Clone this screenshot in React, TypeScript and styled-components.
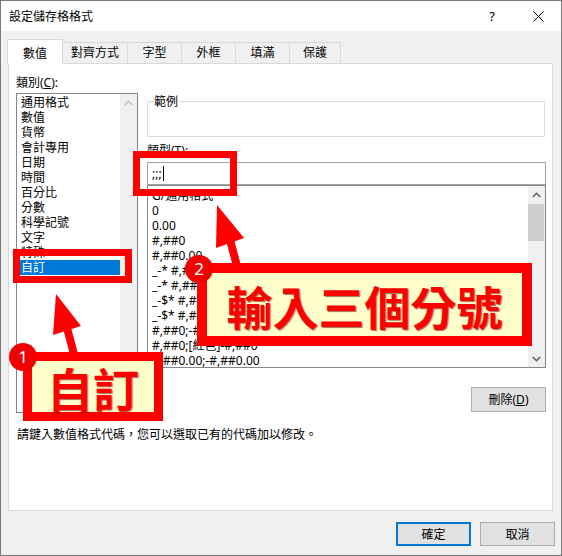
import React from "react";
import styled, { createGlobalStyle } from "styled-components";

const GlobalStyle = createGlobalStyle`
  html, body { margin: 0; padding: 0; background: #ffffff; }
  body {
    font-family: "Noto Sans", "Noto Sans CJK TC", sans-serif;
    font-size: 12px;
    color: #000;
  }
  * { box-sizing: border-box; }
`;

const Window = styled.div`
  position: relative;
  width: 562px;
  height: 556px;
  border: 1px solid #7a7a7a;
  background: #f0f0f0;
  display: flex;
  flex-direction: column;
  overflow: hidden;
`;

const TitleBar = styled.div`
  height: 30px;
  background: #ffffff;
  display: flex;
  align-items: center;
  padding-left: 8px;
  flex-shrink: 0;
`;

const TitleText = styled.span`
  font-size: 12px;
  line-height: 15px;
  margin-top: 1px;
`;

const CaptionButtons = styled.div`
  margin-left: auto;
  display: flex;
  height: 100%;
`;

const CaptionButton = styled.div`
  width: 46px;
  height: 30px;
  display: flex;
  align-items: center;
  justify-content: center;
  font-size: 13px;
  font-family: "Noto Sans", sans-serif;
`;

const TabStrip = styled.div`
  height: 33px;
  display: flex;
  align-items: flex-end;
  padding-left: 6px;
  margin-bottom: -1px;
  position: relative;
  z-index: 1;
  flex-shrink: 0;
`;

const Tab = styled.div<{ $active?: boolean; $w: number }>`
  width: ${(p) => p.$w}px;
  height: ${(p) => (p.$active ? 25 : 21)}px;
  margin-bottom: ${(p) => (p.$active ? 0 : 1)}px;
  padding-top: ${(p) => (p.$active ? 6 : 2)}px;
  background: ${(p) => (p.$active ? "#ffffff" : "#f0f0f0")};
  border: 1px solid #d9d9d9;
  border-bottom: none;
  text-align: center;
  line-height: 15px;
  position: relative;
  z-index: ${(p) => (p.$active ? 2 : 1)};
  & + & { margin-left: -1px; }
`;

const Panel = styled.div`
  margin-left: 7px;
  width: 545px;
  height: 448px;
  flex-shrink: 0;
  background: #ffffff;
  border: 1px solid #d9d9d9;
  padding: 11px 6px 0 7px;
  display: grid;
  grid-template-columns: 122px 399px;
  column-gap: 9px;
  align-content: start;
`;

const Column = styled.div`
  display: flex;
  flex-direction: column;
`;

const FieldLabel = styled.div<{ $gapTop?: number }>`
  line-height: 15px;
  margin-top: ${(p) => p.$gapTop ?? 0}px;
`;

const Accel = styled.span`
  text-decoration: underline;
  text-underline-offset: 1px;
`;

const ListBox = styled.div<{ $h: number; $mt?: number }>`
  height: ${(p) => p.$h}px;
  margin-top: ${(p) => p.$mt ?? 0}px;
  border: 1px solid #828790;
  background: #ffffff;
  display: flex;
`;

const ListItems = styled.div<{ $pl: number }>`
  flex: 1;
  padding-top: ${(p) => p.$pl === 3 ? 1 : 2}px;
  overflow: hidden;
`;

const ListItem = styled.div<{ $selected?: boolean; $pl: number }>`
  height: 15px;
  line-height: 15px;
  margin-left: 1px;
  padding-left: ${(p) => p.$pl}px;
  white-space: nowrap;
  background: ${(p) => (p.$selected ? "#0078d7" : "transparent")};
  color: ${(p) => (p.$selected ? "#ffffff" : "#000000")};
`;

const ScrollBar = styled.div`
  width: 17px;
  background: #f0f0f0;
  display: flex;
  flex-direction: column;
  flex-shrink: 0;
`;

const ScrollArrow = styled.div`
  height: 17px;
  display: flex;
  align-items: center;
  justify-content: center;
`;

const ScrollThumb = styled.div`
  height: 37px;
  margin: 1px 1px 0 0;
  background: #cdcdcd;
`;

const Spacer = styled.div`
  flex: 1;
`;

const GroupBox = styled.div`
  position: relative;
  margin-top: 26px;
  width: 398px;
  height: 36px;
  border: 1px solid #dcdcdc;
`;

const GroupLegend = styled.span`
  position: absolute;
  top: -8px;
  left: 5px;
  padding: 0 1px;
  line-height: 15px;
  background: #ffffff;
`;

const TypeInput = styled.div`
  margin-top: 4px;
  height: 23px;
  border: 1px solid #a5a5a5;
  padding-left: 4px;
  display: flex;
  align-items: center;
  line-height: 15px;
`;

const Caret = styled.span`
  display: inline-block;
  width: 1px;
  height: 15px;
  background: #000;
  margin-left: 1px;
`;

const ButtonRow = styled.div`
  margin-top: 19px;
  display: flex;
  justify-content: flex-end;
`;

const PushButton = styled.div<{ $default?: boolean }>`
  width: 75px;
  height: ${(p) => (p.$default ? 24 : 24)}px;
  background: #e1e1e1;
  border: ${(p) => (p.$default ? "2px solid #0078d7" : "1px solid #adadad")};
  display: flex;
  align-items: center;
  justify-content: center;
  line-height: 15px;
`;

const DeleteButton = styled(PushButton)`
  height: 25px;
`;

const Hint = styled.div`
  grid-column: 1 / -1;
  margin-top: 14px;
  line-height: 15px;
  padding-left: 1px;
`;

const Footer = styled.div`
  margin-top: 11px;
  display: flex;
  justify-content: flex-end;
  gap: 9px;
  padding-right: 6px;
`;

/* ---------- annotation overlays ---------- */

const RedFrame = styled.div<{ $x: number; $y: number; $w: number; $h: number; $b: number }>`
  position: absolute;
  left: ${(p) => p.$x}px;
  top: ${(p) => p.$y}px;
  width: ${(p) => p.$w}px;
  height: ${(p) => p.$h}px;
  border: ${(p) => p.$b}px solid #ff0000;
  z-index: 5;
`;

const Callout = styled(RedFrame)`
  background: #ffffcc;
  display: flex;
  align-items: center;
  justify-content: center;
  color: #ff0000;
  font-family: "Noto Sans CJK TC", sans-serif;
  font-weight: 700;
  font-size: 46px;
  line-height: 1;
  text-shadow: 1px 1px 1px rgba(90, 0, 0, 0.55);
  z-index: 7;
`;

const Badge = styled.div<{ $x: number; $y: number }>`
  position: absolute;
  left: ${(p) => p.$x}px;
  top: ${(p) => p.$y}px;
  width: 28px;
  height: 28px;
  border-radius: 50%;
  background: #f00000;
  color: #ffffff;
  font-family: "Noto Sans", sans-serif;
  font-size: 17px;
  line-height: 28px;
  text-align: center;
  z-index: 8;
`;

const ArrowLayer = styled.svg`
  position: absolute;
  left: -1px;
  top: -1px;
  z-index: 6;
  pointer-events: none;
`;

const Chevron = ({ up, color }: { up: boolean; color: string }) => (
  <svg width="9" height="6" viewBox="0 0 9 6">
    <polyline
      points={up ? "0.8,5 4.5,1.3 8.2,5" : "0.8,1 4.5,4.7 8.2,1"}
      fill="none"
      stroke={color}
      strokeWidth="1.6"
    />
  </svg>
);

const categories = [
  "通用格式",
  "數值",
  "貨幣",
  "會計專用",
  "日期",
  "時間",
  "百分比",
  "分數",
  "科學記號",
  "文字",
  "特殊",
  "自訂",
];

const formats = [
  "G/通用格式",
  "0",
  "0.00",
  "#,##0",
  "#,##0.00",
  "_-* #,##0_-;-* #,##0_-;_-* \"-\"_-;_-@_-",
  "_-* #,##0.00_-;-* #,##0.00_-;_-* \"-\"??_-;_-@_-",
  "_-$* #,##0_-;-$* #,##0_-;_-$* \"-\"_-;_-@_-",
  "_-$* #,##0.00_-;-$* #,##0.00_-;_-$* \"-\"??_-;_-@_-",
  "#,##0;-#,##0",
  "#,##0;[紅色]-#,##0",
  "#,##0.00;-#,##0.00",
];

const tabs = [
  { label: "數值", w: 56 },
  { label: "對齊方式", w: 66 },
  { label: "字型", w: 55 },
  { label: "外框", w: 55 },
  { label: "填滿", w: 55 },
  { label: "保護", w: 52 },
];

export default function App() {
  return (
    <>
      <GlobalStyle />
      <Window>
        <TitleBar>
          <TitleText>設定儲存格格式</TitleText>
          <CaptionButtons>
            <CaptionButton>?</CaptionButton>
            <CaptionButton>
              <svg width="11" height="11" viewBox="0 0 11 11">
                <path d="M0.5 0.5 L10.5 10.5 M10.5 0.5 L0.5 10.5" stroke="#000" strokeWidth="1" />
              </svg>
            </CaptionButton>
          </CaptionButtons>
        </TitleBar>

        <TabStrip>
          {tabs.map((t, i) => (
            <Tab key={t.label} $active={i === 0} $w={t.w}>
              {t.label}
            </Tab>
          ))}
        </TabStrip>

        <Panel>
          <Column>
            <FieldLabel>
              類別(<Accel>C</Accel>):
            </FieldLabel>
            <ListBox $h={320} $mt={3}>
              <ListItems $pl={3}>
                {categories.map((c) => (
                  <ListItem key={c} $pl={3} $selected={c === "自訂"}>
                    {c}
                  </ListItem>
                ))}
              </ListItems>
              <ScrollBar>
                <ScrollArrow>
                  <Chevron up color="#c0c0c0" />
                </ScrollArrow>
              </ScrollBar>
            </ListBox>
          </Column>

          <Column>
            <GroupBox>
              <GroupLegend>範例</GroupLegend>
            </GroupBox>
            <FieldLabel $gapTop={6}>
              類型(<Accel>T</Accel>):
            </FieldLabel>
            <TypeInput>
              ;;;
              <Caret />
            </TypeInput>
            <ListBox $h={183}>
              <ListItems $pl={4}>
                {formats.map((f) => (
                  <ListItem key={f} $pl={3}>
                    {f}
                  </ListItem>
                ))}
              </ListItems>
              <ScrollBar>
                <ScrollArrow>
                  <Chevron up color="#606060" />
                </ScrollArrow>
                <ScrollThumb />
                <Spacer />
                <ScrollArrow>
                  <Chevron up={false} color="#606060" />
                </ScrollArrow>
              </ScrollBar>
            </ListBox>
            <ButtonRow>
              <DeleteButton>
                刪除(<Accel>D</Accel>)
              </DeleteButton>
            </ButtonRow>
          </Column>

          <Hint>請鍵入數值格式代碼，您可以選取已有的代碼加以修改。</Hint>
        </Panel>

        <Footer>
          <PushButton $default>確定</PushButton>
          <PushButton>取消</PushButton>
        </Footer>

        {/* annotations */}
        <RedFrame $x={132} $y={150} $w={104} $h={45} $b={7} />
        <RedFrame $x={12} $y={248} $w={119} $h={34} $b={7} />

        <ArrowLayer width="562" height="556" viewBox="0 0 562 556">
          <polygon points="56,294 53,335 81,326" fill="#ff0000" />
          <line x1="67" y1="328" x2="74" y2="354" stroke="#ff0000" strokeWidth="8" />
          <polygon points="217,205 216,248 244,238" fill="#ff0000" />
          <line x1="230" y1="240" x2="237" y2="266" stroke="#ff0000" strokeWidth="8" />
        </ArrowLayer>

        <Callout $x={196} $y={262} $w={335} $h={83} $b={10}>
          輸入三個分號
        </Callout>
        <Callout $x={22} $y={351} $w={140} $h={69} $b={9}>
          自訂
        </Callout>

        <Badge $x={184} $y={254}>2</Badge>
        <Badge $x={8} $y={342}>1</Badge>
      </Window>
    </>
  );
}
